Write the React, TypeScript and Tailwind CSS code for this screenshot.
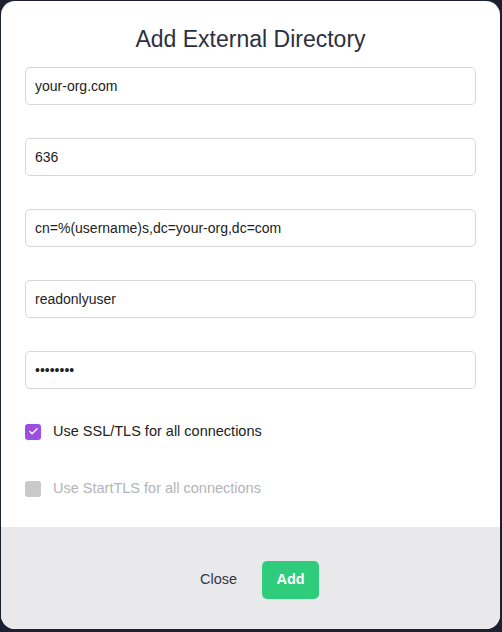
import { Check } from 'lucide-react'

const fields = [
    { value: 'your-org.com', type: 'text' },
    { value: '636', type: 'text' },
    { value: 'cn=%(username)s,dc=your-org,dc=com', type: 'text' },
    { value: 'readonlyuser', type: 'text' },
    { value: 'password', type: 'password' },
]

const App = () => {
    return (
        <div className="w-[502px] h-[632px] bg-[#1c2030] p-px pr-[2px] pb-[3px] font-['Liberation_Sans',Arial,sans-serif]">
            <div className="h-full bg-white rounded-[14px] overflow-hidden flex flex-col">
                <div className="flex-1 px-6">
                    <h1 className="text-center text-[23px] text-[#2c3040] font-light pt-[23px] leading-[30px]">
                        Add External Directory
                    </h1>
                    <div className="mt-[13px] grid gap-[33px]">
                        {fields.map((f, i) => (
                            <input
                                key={i}
                                type={f.type}
                                defaultValue={f.value}
                                className="h-[38px] w-full border border-[#d6d6d9] rounded-[5px] px-[9px] text-[14px] text-[#222] outline-none"
                            />
                        ))}
                    </div>
                    <div className="mt-[32px] flex items-center gap-3">
                        <span className="size-4 rounded-[3px] bg-[#9a4fe0] flex items-center justify-center">
                            <Check size={11} strokeWidth={3} className="text-white" />
                        </span>
                        <span className="text-[14.5px] text-[#222]">Use SSL/TLS for all connections</span>
                    </div>
                    <div className="mt-[35px] flex items-center gap-3">
                        <span className="size-4 rounded-[3px] bg-[#c9c9cb]"></span>
                        <span className="text-[14.5px] text-[#b3b3b6]">Use StartTLS for all connections</span>
                    </div>
                </div>
                <div className="h-[102px] bg-[#e9e9ec] flex items-center justify-center gap-[25px] pl-[18px] pt-[3px]">
                    <button className="text-[14.5px] text-[#333645]">Close</button>
                    <button className="h-[38px] w-[57px] rounded-[5px] bg-[#2ecc7b] text-white text-[14.5px] font-semibold">
                        Add
                    </button>
                </div>
            </div>
        </div>
    )
}

export default App
